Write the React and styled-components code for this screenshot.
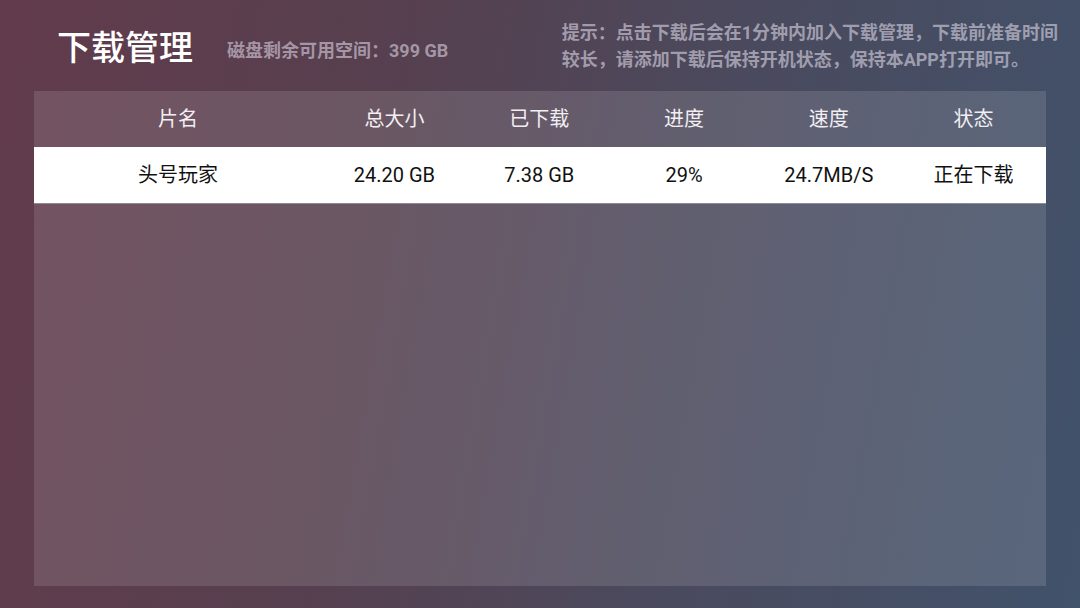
import styled, { createGlobalStyle } from "styled-components";

const GlobalStyle = createGlobalStyle`
    html, body {
        margin: 0;
        padding: 0;
    }
    body {
        font-family: Roboto, "Noto Sans CJK SC", sans-serif;
    }
`;

const Page = styled.div`
    width: 1080px;
    height: 608px;
    display: flex;
    flex-direction: column;
    background: linear-gradient(100deg, #623b4c 0%, #56404f 35%, #4a4a5e 65%, #41526b 100%);
    overflow: hidden;
    box-sizing: border-box;
    padding: 0 34px 22px;
`;

const TopBar = styled.div`
    height: 91px;
    display: flex;
    align-items: center;
    padding-left: 23px;
`;

const Title = styled.h1`
    margin: 0;
    font-size: 34px;
    font-weight: 500;
    color: #ffffff;
`;

const DiskInfo = styled.span`
    margin-left: 34px;
    margin-top: 6px;
    font-size: 18px;
    font-weight: 700;
    color: rgba(200, 190, 205, 0.7);
`;

const Hint = styled.p`
    margin: 0 -12px 0 auto;
    font-size: 18px;
    line-height: 27px;
    font-weight: 700;
    color: rgba(200, 195, 210, 0.7);
`;

const Panel = styled.div`
    flex: 1;
    background: rgba(255, 255, 255, 0.12);
    display: flex;
    flex-direction: column;
`;

const Row = styled.div`
    display: grid;
    grid-template-columns: 288px repeat(5, 1fr);
    height: ${p => (p.$header ? "56px" : "57px")};
    align-items: center;
    background: ${p => (p.$header ? "transparent" : "#ffffff")};
    border-bottom: ${p => (p.$header ? "none" : "1px solid #8e8a96")};
    color: ${p => (p.$header ? "#f2eef2" : "#111111")};
    box-sizing: border-box;
`;

const Cell = styled.div`
    text-align: center;
    font-size: 20px;
    line-height: 24px;
`;

const columns = ["片名", "总大小", "已下载", "进度", "速度", "状态"];

const downloads = [
    { name: "头号玩家", total: "24.20 GB", done: "7.38 GB", progress: "29%", speed: "24.7MB/S", status: "正在下载" },
];

export default function App() {
    return (
        <>
            <GlobalStyle />
            <Page>
                <TopBar>
                    <Title>下载管理</Title>
                    <DiskInfo>磁盘剩余可用空间：399 GB</DiskInfo>
                    <Hint>
                        提示：点击下载后会在1分钟内加入下载管理，下载前准备时间<br />
                        较长，请添加下载后保持开机状态，保持本APP打开即可。
                    </Hint>
                </TopBar>
                <Panel>
                    <Row $header>
                        {columns.map(c => <Cell key={c}>{c}</Cell>)}
                    </Row>
                    {downloads.map(d => (
                        <Row key={d.name}>
                            <Cell>{d.name}</Cell>
                            <Cell>{d.total}</Cell>
                            <Cell>{d.done}</Cell>
                            <Cell>{d.progress}</Cell>
                            <Cell>{d.speed}</Cell>
                            <Cell>{d.status}</Cell>
                        </Row>
                    ))}
                </Panel>
            </Page>
        </>
    );
}
